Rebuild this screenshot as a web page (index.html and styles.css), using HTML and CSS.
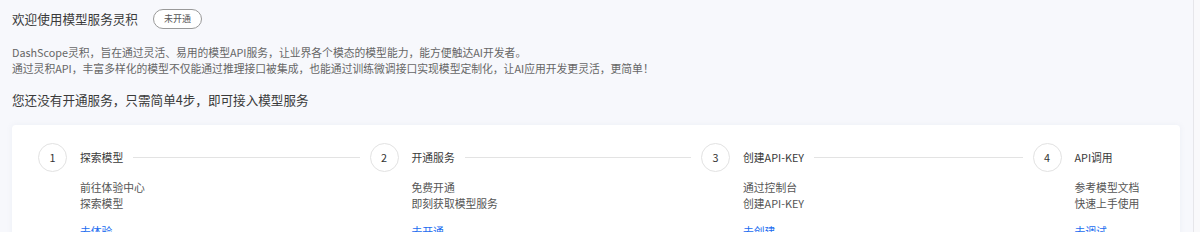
FILE: index.html
```html
<!DOCTYPE html>
<html lang="zh-CN">
<head>
    <meta charset="UTF-8">
    <meta name="viewport" content="width=device-width, initial-scale=1.0">
    <title>模型服务灵积</title>
    <link rel="stylesheet" href="styles.css">
</head>
<body>

    <div class="page">

        <!-- Intro -->
        <div class="intro">
            <div class="title-row">
                <h1>欢迎使用模型服务灵积</h1>
                <span class="badge">未开通</span>
            </div>
            <p class="desc">DashScope灵积，旨在通过灵活、易用的模型API服务，让业界各个模态的模型能力，能方便触达AI开发者。</p>
            <p class="desc">通过灵积API，丰富多样化的模型不仅能通过推理接口被集成，也能通过训练微调接口实现模型定制化，让AI应用开发更灵活，更简单！</p>
            <h2>您还没有开通服务，只需简单4步，即可接入模型服务</h2>
        </div>

        <!-- Steps card -->
        <div class="card">
            <div class="steps">
                <div class="step">
                    <div class="step-head">
                        <span class="step-num">1</span>
                        <span class="step-title">探索模型</span>
                        <span class="step-line"></span>
                    </div>
                    <div class="step-body">
                        <p>前往体验中心</p>
                        <p>探索模型</p>
                        <a class="step-link" href="#">去体验</a>
                    </div>
                </div>
                <div class="step">
                    <div class="step-head">
                        <span class="step-num">2</span>
                        <span class="step-title">开通服务</span>
                        <span class="step-line"></span>
                    </div>
                    <div class="step-body">
                        <p>免费开通</p>
                        <p>即刻获取模型服务</p>
                        <a class="step-link" href="#">去开通</a>
                    </div>
                </div>
                <div class="step">
                    <div class="step-head">
                        <span class="step-num">3</span>
                        <span class="step-title">创建API-KEY</span>
                        <span class="step-line"></span>
                    </div>
                    <div class="step-body">
                        <p>通过控制台</p>
                        <p>创建API-KEY</p>
                        <a class="step-link" href="#">去创建</a>
                    </div>
                </div>
                <div class="step last">
                    <div class="step-head">
                        <span class="step-num">4</span>
                        <span class="step-title">API调用</span>
                    </div>
                    <div class="step-body">
                        <p>参考模型文档</p>
                        <p>快速上手使用</p>
                        <a class="step-link" href="#">去调试</a>
                    </div>
                </div>
            </div>
        </div>

    </div>

    <div class="side-rail"></div>

</body>
</html>
```

FILE: styles.css
```css
* {
    margin: 0;
    padding: 0;
    box-sizing: border-box;
}

body {
    font-family: "Noto Sans CJK SC", "Noto Sans", sans-serif;
    background-color: #f7f8fc;
    color: #333;
    display: flex;
    height: 100vh;
    overflow: hidden;
}

.page {
    flex: 1;
    padding: 9px 13px 0 12px;
}

.side-rail {
    width: 7px;
    background-color: #f9f9fb;
    border-left: 1px solid #e6e6ea;
}

/* Intro */
.title-row {
    display: flex;
    align-items: center;
    height: 20px;
}

h1 {
    font-size: 12.6px;
    font-weight: 400;
    color: #3a3a3a;
    line-height: 20px;
}

.badge {
    margin-left: 15px;
    height: 20px;
    line-height: 18px;
    padding: 0 10px;
    border: 1px solid #999;
    border-radius: 10px;
    font-size: 9px;
    color: #555;
    background-color: #fff;
}

.desc {
    font-size: 10.8px;
    line-height: 16px;
    color: #666;
}

.title-row + .desc {
    margin-top: 15px;
}

h2 {
    font-size: 12.6px;
    font-weight: 400;
    color: #3a3a3a;
    line-height: 20px;
    margin-top: 14px;
}

/* Card */
.card {
    margin-top: 15px;
    background-color: #fff;
    border-radius: 4px;
    box-shadow: 0 0 6px rgba(120, 130, 170, 0.08);
    padding: 17px 28px 0 26px;
    height: 120px;
}

.steps {
    display: grid;
    grid-template-columns: 331.5px 331.5px 331.5px auto;
}

.step-head {
    display: flex;
    align-items: center;
    height: 30px;
}

.step-num {
    flex: none;
    width: 29px;
    height: 29px;
    border: 1px solid #e2e2e2;
    border-radius: 50%;
    display: flex;
    align-items: center;
    justify-content: center;
    font-size: 10.8px;
    color: #333;
}

.step-title {
    flex: none;
    margin-left: 13px;
    font-size: 10.8px;
    color: #3a3a3a;
}

.step-line {
    flex: 1;
    height: 1px;
    background-color: #e3e3e3;
    margin: 0 10px 0 10px;
}

.step-body {
    padding-left: 42px;
    margin-top: 7px;
}

.step-body p {
    font-size: 10.8px;
    line-height: 16px;
    color: #555;
}

.step-link {
    display: block;
    margin-top: 12px;
    font-size: 10.8px;
    line-height: 16px;
    color: #1a6cf0;
    text-decoration: none;
}
```
